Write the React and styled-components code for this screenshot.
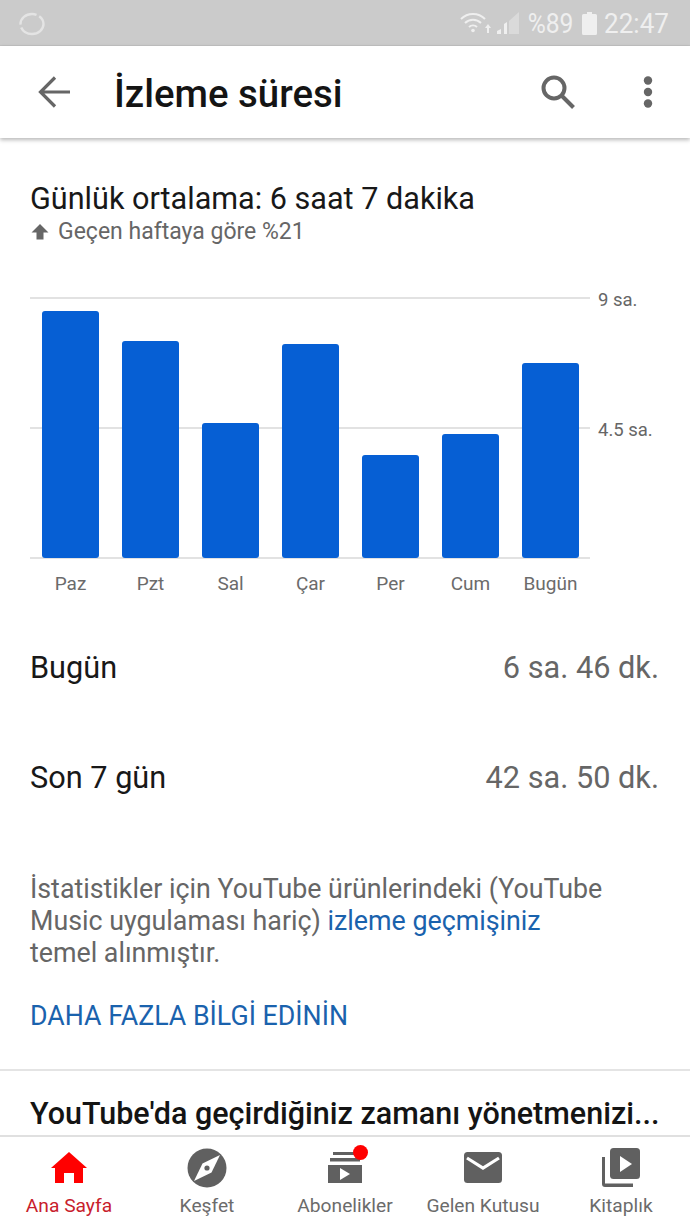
import React from 'react';
import styled, { createGlobalStyle } from 'styled-components';

const GlobalStyle = createGlobalStyle`
  html, body {
    margin: 0;
    padding: 0;
    background: #fff;
  }
  * {
    box-sizing: border-box;
  }
`;

const Page = styled.div`
  width: 690px;
  height: 1227px;
  display: flex;
  flex-direction: column;
  overflow: hidden;
  font-family: Roboto, 'Noto Sans', sans-serif;
  background: #fff;
`;

const StatusBar = styled.div`
  height: 46px;
  flex: none;
  display: flex;
  align-items: center;
  padding: 2px 23px 0 19px;
  background: #cbcbcb;
  color: #efefef;
  border-bottom: 1px solid #c2c2c2;
`;

const StatusRight = styled.div`
  margin-left: auto;
  display: flex;
  align-items: center;
  gap: 9px;
`;

const StatusText = styled.span`
  font-size: 28px;
  line-height: 32px;
  display: flex;
  justify-content: center;
  transform: scaleX(${(p) => p.$scale});
  width: ${(p) => p.$width}px;
  white-space: nowrap;
`;

const Header = styled.header`
  height: 92px;
  flex: none;
  display: flex;
  align-items: center;
  background: #fff;
  box-shadow: 0 2px 4px rgba(0, 0, 0, 0.28);
  position: relative;
  z-index: 1;
  padding: 0 37px 0 36px;
`;

const Title = styled.h1`
  margin: 3px 0 0 42px;
  font-size: 38.4px;
  font-weight: 500;
  color: #141414;
  flex: 1;
`;

const HeaderIcon = styled.svg`
  display: block;
  flex: none;
  margin-left: ${(p) => p.$gap || 0}px;
`;

const Main = styled.main`
  flex: 1;
  min-height: 0;
  overflow: hidden;
`;

const Summary = styled.section`
  padding: 43px 30px 0;
`;

const SummaryTitle = styled.h2`
  margin: 0;
  font-size: 30.6px;
  line-height: 36px;
  font-weight: 400;
  color: #181818;
`;

const Change = styled.div`
  display: flex;
  align-items: center;
  gap: 9px;
  font-size: 23px;
  line-height: 30px;
  color: #666;
  padding-left: 1px;
`;

const Chart = styled.div`
  position: relative;
  height: 262px;
  width: 560px;
  margin: 50px 0 0 30px;
`;

const GridLine = styled.div`
  position: absolute;
  left: 0;
  right: 0;
  top: ${(p) => p.$top}px;
  height: 2px;
  background: #e2e2e2;
`;

const AxisLabel = styled.span`
  position: absolute;
  left: 568px;
  top: ${(p) => p.$top}px;
  font-size: 18.5px;
  line-height: 22px;
  color: #666;
  white-space: nowrap;
`;

const Bars = styled.div`
  position: relative;
  height: 261px;
  padding: 0 11px 0 12px;
  display: flex;
  align-items: flex-end;
  justify-content: space-between;
`;

const Bar = styled.div`
  width: 57px;
  border-radius: 3px;
  background: #065fd4;
`;

const DayLabels = styled.div`
  display: flex;
  justify-content: space-between;
  width: 560px;
  margin: 13px 0 0 30px;
  padding: 0 11px 0 12px;
`;

const DayLabel = styled.span`
  width: 57px;
  display: flex;
  justify-content: center;
  white-space: nowrap;
  font-size: 19px;
  line-height: 24px;
  color: #6b6b6b;
`;

const Stats = styled.section`
  padding: 53px 31px 0 30px;
  display: flex;
  flex-direction: column;
  gap: 74px;
`;

const StatRow = styled.div`
  display: flex;
  justify-content: space-between;
  align-items: center;
  height: 36px;
`;

const StatName = styled.span`
  font-size: 30.7px;
  color: #181818;
`;

const StatValue = styled.span`
  font-size: 30.7px;
  color: #666;
`;

const Note = styled.p`
  margin: 78px 0 0;
  padding: 0 30px;
  font-size: 26.8px;
  line-height: 32px;
  color: #666;
`;

const NoteLink = styled.a`
  color: #1a62ad;
  text-decoration: none;
`;

const MoreLink = styled.a`
  display: block;
  margin: 31px 0 0;
  padding: 0 30px;
  font-size: 26.75px;
  line-height: 32px;
  color: #1a62ad;
  text-decoration: none;
`;

const Divider = styled.div`
  height: 2px;
  margin-top: 37px;
  background: #e4e4e4;
`;

const Promo = styled.h3`
  margin: 0;
  padding: 25px 30px 0;
  font-size: 30.5px;
  line-height: 36px;
  font-weight: 500;
  color: #141414;
  white-space: nowrap;
`;

const Nav = styled.nav`
  height: 92px;
  flex: none;
  display: grid;
  grid-template-columns: repeat(5, 138px);
  background: #fff;
  border-top: 2px solid #e0e0e0;
`;

const NavItem = styled.a`
  position: relative;
  display: flex;
  flex-direction: column;
  align-items: center;
  padding-top: 11px;
  color: ${(p) => (p.$active ? '#c8202c' : '#6b6b6b')};
`;

const NavLabel = styled.span`
  margin-top: 6px;
  font-size: 19.2px;
  line-height: 24px;
  white-space: nowrap;
`;

const NavIcon = styled.svg`
  display: block;
  width: 40px;
  height: 40px;
`;

const Badge = styled.span`
  position: absolute;
  top: 8px;
  left: 77px;
  width: 15px;
  height: 15px;
  border-radius: 50%;
  background: #f00;
`;

const bars = [
  { day: 'Paz', height: 247 },
  { day: 'Pzt', height: 217 },
  { day: 'Sal', height: 135 },
  { day: 'Çar', height: 214 },
  { day: 'Per', height: 103 },
  { day: 'Cum', height: 124 },
  { day: 'Bugün', height: 195 },
];

const BackIcon = () => (
  <HeaderIcon width="36" height="36" viewBox="0 0 36 36" fill="none" stroke="#666" strokeWidth="3.2">
    <path d="M34 18H5M19 3.5 4.5 18 19 32.5" />
  </HeaderIcon>
);

const SearchIcon = () => (
  <HeaderIcon width="36" height="36" viewBox="0 0 36 36" fill="none" stroke="#666" strokeWidth="4">
    <circle cx="14" cy="14" r="10.5" />
    <path d="M21.5 21.5 33.5 33.5" />
  </HeaderIcon>
);

const MoreIcon = () => (
  <HeaderIcon width="10" height="32" viewBox="0 0 10 32" fill="#666" $gap={67}>
    <circle cx="5" cy="4.5" r="4.2" />
    <circle cx="5" cy="16" r="4.2" />
    <circle cx="5" cy="27.5" r="4.2" />
  </HeaderIcon>
);

const UpArrow = () => (
  <svg width="18" height="16" viewBox="0 0 18 16" fill="#666">
    <path d="M9 0 17.5 8.5H12.5V15.5H5.5V8.5H.5Z" />
  </svg>
);

const Loader = () => (
  <svg width="26" height="24" viewBox="0 0 26 24" fill="none" stroke="#e4e4e4" strokeWidth="2.4">
    <ellipse cx="13" cy="12" rx="11.5" ry="10" strokeDasharray="30 3 22 3" />
  </svg>
);

const WifiSignal = () => (
  <svg width="59" height="23" viewBox="0 0 59 23" fill="none">
    <g stroke="#efefef" strokeWidth="2">
      <path d="M1 7A17 17 0 0 1 25 7" />
      <path d="M5 11A11.5 11.5 0 0 1 21 11" />
      <path d="M9 15A6 6 0 0 1 17 15" />
    </g>
    <circle cx="13" cy="18.5" r="1.8" fill="#efefef" />
    <path d="M28 12 31 16H29V21H27V16H25ZM37 22V19L41 17V22ZM44 22V12L47 10V22Z" fill="#efefef" />
    <path d="M49 22V9L59 0V22Z" fill="#dadada" />
  </svg>
);

const Battery = () => (
  <svg width="15" height="23" viewBox="0 0 15 23" fill="#efefef">
    <path d="M5 0H10V2H13.5Q15 2 15 3.5V21.5Q15 23 13.5 23H1.5Q0 23 0 21.5V3.5Q0 2 1.5 2H5Z" />
  </svg>
);

const HomeIcon = () => (
  <NavIcon viewBox="0 0 40 40" fill="#f00">
    <path d="M20 4 38 20H34V35H25V25H15V35H6V20H2Z" />
  </NavIcon>
);

const ExploreIcon = () => (
  <NavIcon viewBox="0 0 40 40">
    <circle cx="20" cy="20" r="19.5" fill="#606060" />
    <path d="M33 7 24.5 24.5 7 33 15.5 15.5Z" fill="#fff" />
    <circle cx="20" cy="20" r="2.6" fill="#606060" />
  </NavIcon>
);

const SubscriptionsIcon = () => (
  <NavIcon viewBox="0 0 40 40" fill="#606060">
    <path d="M8 4H32V7H8ZM5 10H35V13.5H5ZM3 17H37V35H3Z" />
    <path d="M15 20 25 26 15 32Z" fill="#fff" />
  </NavIcon>
);

const InboxIcon = () => (
  <NavIcon viewBox="0 0 40 40">
    <rect x="1" y="4" width="38" height="31" rx="3.5" fill="#606060" />
    <path d="M4 10 20 20 36 10" fill="none" stroke="#fff" strokeWidth="3.2" />
  </NavIcon>
);

const LibraryIcon = () => (
  <NavIcon viewBox="0 0 40 40" fill="#606060">
    <path d="M1 9H4V35.5H32V39H4Q1 39 1 36Z" />
    <rect x="9" y="0" width="30" height="31" rx="3.5" />
    <path d="M19 8 31 16 19 24Z" fill="#fff" />
  </NavIcon>
);

const navItems = [
  { label: 'Ana Sayfa', Icon: HomeIcon, active: true },
  { label: 'Keşfet', Icon: ExploreIcon },
  { label: 'Abonelikler', Icon: SubscriptionsIcon, badge: true },
  { label: 'Gelen Kutusu', Icon: InboxIcon },
  { label: 'Kitaplık', Icon: LibraryIcon },
];

export default function App() {
  return (
    <Page>
      <GlobalStyle />
      <StatusBar>
        <Loader />
        <StatusRight>
          <WifiSignal />
          <StatusText $width={45} $scale={0.88}>%89</StatusText>
          <Battery />
          <StatusText $width={61} $scale={0.93}>22:47</StatusText>
        </StatusRight>
      </StatusBar>
      <Header>
        <BackIcon />
        <Title>İzleme süresi</Title>
        <SearchIcon />
        <MoreIcon />
      </Header>
      <Main>
        <Summary>
          <SummaryTitle>Günlük ortalama: 6 saat 7 dakika</SummaryTitle>
          <Change>
            <UpArrow />
            Geçen haftaya göre %21
          </Change>
        </Summary>
        <Chart>
          <GridLine $top={0} />
          <GridLine $top={130} />
          <GridLine $top={260} />
          <AxisLabel $top={-8}>9 sa.</AxisLabel>
          <AxisLabel $top={122}>4.5 sa.</AxisLabel>
          <Bars>
            {bars.map((bar) => (
              <Bar key={bar.day} style={{ height: bar.height }} />
            ))}
          </Bars>
        </Chart>
        <DayLabels>
          {bars.map((bar) => (
            <DayLabel key={bar.day}>{bar.day}</DayLabel>
          ))}
        </DayLabels>
        <Stats>
          <StatRow>
            <StatName>Bugün</StatName>
            <StatValue>6 sa. 46 dk.</StatValue>
          </StatRow>
          <StatRow>
            <StatName>Son 7 gün</StatName>
            <StatValue>42 sa. 50 dk.</StatValue>
          </StatRow>
        </Stats>
        <Note>
          İstatistikler için YouTube ürünlerindeki (YouTube
          <br />
          Music uygulaması hariç) <NoteLink>izleme geçmişiniz</NoteLink>
          <br />
          temel alınmıştır.
        </Note>
        <MoreLink>DAHA FAZLA BİLGİ EDİNİN</MoreLink>
        <Divider />
        <Promo>YouTube'da geçirdiğiniz zamanı yönetmenizi...</Promo>
      </Main>
      <Nav>
        {navItems.map(({ label, Icon, active, badge }) => (
          <NavItem key={label} $active={active}>
            <Icon />
            {badge && <Badge />}
            <NavLabel>{label}</NavLabel>
          </NavItem>
        ))}
      </Nav>
    </Page>
  );
}
